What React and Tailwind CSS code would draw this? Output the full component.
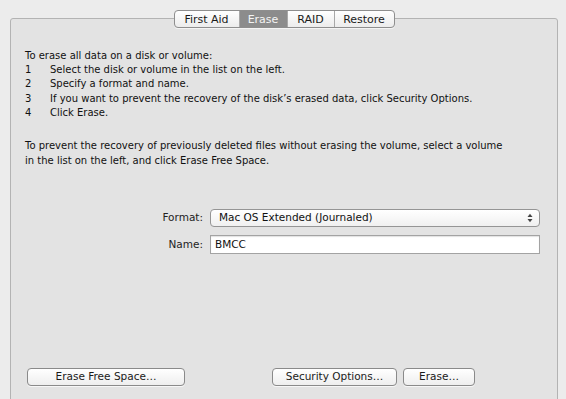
import React from "react";

const tabs = ["First Aid", "Erase", "RAID", "Restore"];

const steps = [
  "Select the disk or volume in the list on the left.",
  "Specify a format and name.",
  "If you want to prevent the recovery of the disk\u2019s erased data, click Security Options.",
  "Click Erase.",
];

function TabBar() {
  return (
    <div className="relative z-10 flex justify-center -mb-[10px]">
      <div className="flex h-[18px] rounded-[4px] border border-[#8e8e8e] bg-gradient-to-b from-white to-[#ececec] shadow-[0_1px_0_rgba(255,255,255,0.6)] overflow-hidden">
        {tabs.map((t, i) => {
          const active = t === "Erase";
          return (
            <div
              key={t}
              className={`flex items-center justify-center text-[11px] leading-none ${
                i > 0 ? "border-l border-[#a8a8a8]" : ""
              } ${
                active
                  ? "bg-[#8c8c8c] text-[#f4f4f4]"
                  : "text-[#1a1a1a]"
              } ${
                t === "First Aid" ? "w-[64px]" : t === "Erase" ? "w-[48px]" : t === "RAID" ? "w-[47px]" : "w-[60px]"
              }`}
            >
              {t}
            </div>
          );
        })}
      </div>
    </div>
  );
}

function Button({ children, className }) {
  return (
    <div
      className={`flex h-[18px] items-center justify-center rounded-[4px] border border-[#8a8a8a] bg-gradient-to-b from-white to-[#eeeeee] text-[10.5px] text-[#1a1a1a] shadow-[0_1px_0_rgba(255,255,255,0.7)] ${className}`}
    >
      {children}
    </div>
  );
}

export default function App() {
  return (
    <div
      className="h-[399px] w-[566px] overflow-hidden bg-[#ececec] pl-[10px] pr-[8px] pt-[10px]"
      style={{ fontFamily: '"Lucida Grande", "DejaVu Sans", sans-serif' }}
    >
      <TabBar />
      <div className="h-[400px] rounded-t-[3px] border border-[#b3b3b3] bg-[#e3e3e3] pl-[14px] pr-[10px] pt-[30px] text-[10px] text-[#111]">
        {/* instructions */}
        <div className="leading-[14.2px]">
          <div>To erase all data on a disk or volume:</div>
          {steps.map((s, i) => (
            <div key={i} className="flex">
              <span className="w-[25px]">{i + 1}</span>
              <span>{s}</span>
            </div>
          ))}
        </div>
        <div className="mt-[18px] leading-[15px] whitespace-nowrap">
          To prevent the recovery of previously deleted files without erasing the volume, select a volume
          <br />
          in the list on the left, and click Erase Free Space.
        </div>

        {/* format / name */}
        <div className="mt-[41px] ml-[118px] flex flex-col gap-[8px] text-[10.5px]">
          <div className="flex items-center gap-[7px]">
            <label className="w-[60px] text-right text-[#222]">Format:</label>
            <div className="flex h-[18px] w-[330px] items-center justify-between rounded-[4px] border border-[#959595] bg-gradient-to-b from-white to-[#f0f0f0] pl-[8px] pr-[6px] text-[#111]">
              <span>Mac OS Extended (Journaled)</span>
              <svg width="6" height="10" viewBox="0 0 6 10">
                <path d="M0.5 4 L3 0.8 L5.5 4 Z" fill="#444" />
                <path d="M0.5 6 L3 9.2 L5.5 6 Z" fill="#444" />
              </svg>
            </div>
          </div>
          <div className="flex items-center gap-[7px]">
            <label className="w-[60px] text-right text-[#222]">Name:</label>
            <div className="flex h-[19px] w-[330px] items-center border border-[#a3a3a3] bg-white pl-[4px] text-[#111] shadow-[inset_0_1px_1px_rgba(0,0,0,0.12)]">
              BMCC
            </div>
          </div>
        </div>

        {/* bottom buttons */}
        <div className="mt-[114px] flex items-center">
          <Button className="ml-[2px] w-[158px]">Erase Free Space…</Button>
          <Button className="ml-[87px] w-[125px]">Security Options…</Button>
          <Button className="ml-[6px] w-[72px]">Erase…</Button>
        </div>
      </div>
    </div>
  );
}
